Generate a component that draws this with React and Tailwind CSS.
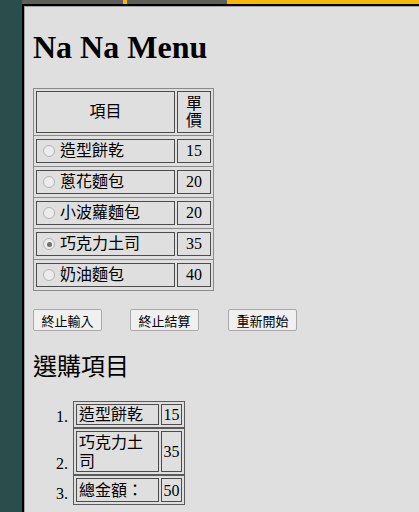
const MENU = [
  { name: "造型餅乾", price: 15 },
  { name: "蔥花麵包", price: 20 },
  { name: "小波蘿麵包", price: 20 },
  { name: "巧克力土司", price: 35, checked: true },
  { name: "奶油麵包", price: 40 },
];

const PICKED = [
  { name: "造型餅乾", price: 15, h: "h-[21px]" },
  { name: "巧克力土司", price: 35, h: "h-[41px]" },
  { name: "總金額：", price: 50, h: "h-[24px]" },
];

function Radio({ checked }) {
  return (
    <span className="ml-[6px] mr-[5px] flex h-[12px] w-[12px] shrink-0 items-center justify-center rounded-full border border-[#b4b4b4] bg-[#ececec]">
      {checked && <span className="h-[5px] w-[5px] rounded-full bg-[#707070]" />}
    </span>
  );
}

export default function App() {
  return (
    <div className="flex h-[512px] w-[419px] overflow-hidden bg-[#2a4e4c] font-['Liberation_Serif','Noto_Sans_CJK_TC',serif] text-black">
      <div className="w-[22px] shrink-0" />
      <div className="flex flex-1 flex-col">
        {/* top progress stripe */}
        <div className="flex h-[4px] shrink-0">
          <div className="w-[101px] bg-[#5e5f5a]" />
          <div className="w-[4px] bg-[#f8b800]" />
          <div className="w-[100px] bg-[#5e5f5a]" />
          <div className="flex-1 bg-[#f8b800]" />
        </div>
        <div className="flex-1 border-l-2 border-t-2 border-black">
          <div className="h-full border-l border-t border-[#a4a4a4] bg-[#dfdfdf] pl-[8px]">
            <h1 className="mt-[22px] text-[32px] font-bold leading-[37px]">Na Na Menu</h1>

            {/* menu table */}
            <div className="mt-[22px] w-[181px] border border-[#8a8a8a] text-[16px]">
              <div className="flex gap-[2px] px-[2px] py-[2px]">
                <div className="flex h-[42px] w-[139px] items-center justify-center border border-[#4c4c4c]">
                  項目
                </div>
                <div className="flex h-[42px] w-[34px] items-center justify-center border border-[#4c4c4c] text-center leading-[17px]">
                  單<br />價
                </div>
              </div>
              {MENU.map((m) => (
                <div key={m.name} className="flex gap-[2px] border-t border-[#8a8a8a] px-[2px] py-[3px]">
                  <div className="flex h-[24px] w-[139px] items-center border border-[#4c4c4c] leading-[20px]">
                    <Radio checked={m.checked} />
                    <span>{m.name}</span>
                  </div>
                  <div className="flex h-[24px] w-[34px] items-center justify-center border border-[#4c4c4c] leading-[20px]">
                    {m.price}
                  </div>
                </div>
              ))}
            </div>

            {/* buttons */}
            <div className="mt-[18px] flex font-['Noto_Sans_CJK_TC',sans-serif] text-[13px]">
              <button className="flex h-[22px] w-[69px] items-center justify-center rounded-[2px] border border-[#a9a9a9] bg-[#f0f0f0] leading-none">
                終止輸入
              </button>
              <button className="ml-[28px] flex h-[22px] w-[69px] items-center justify-center rounded-[2px] border border-[#a9a9a9] bg-[#f0f0f0] leading-none">
                終止結算
              </button>
              <button className="ml-[29px] flex h-[22px] w-[69px] items-center justify-center rounded-[2px] border border-[#a9a9a9] bg-[#f0f0f0] leading-none">
                重新開始
              </button>
            </div>

            <h2 className="mt-[21px] text-[24px] font-normal leading-[30px]">選購項目</h2>

            {/* picked list */}
            <ol className="mt-[19px] flex flex-col text-[16px]">
              {PICKED.map((p, i) => (
                <li key={p.name} className="flex items-end">
                  <span className="w-[40px] pb-[1px] pr-[5px] text-right leading-[20px]">{i + 1}.</span>
                  <div className="flex w-[112px] gap-[2px] border border-[#5a5a5a] px-[2px] py-[2px]">
                    <div className={`flex w-[83px] items-center border border-[#4c4c4c] pl-[2px] leading-[19px] ${p.h}`}>
                      {p.name}
                    </div>
                    <div className={`flex w-[21px] items-center justify-center border border-[#4c4c4c] leading-[19px] ${p.h}`}>
                      {p.price}
                    </div>
                  </div>
                </li>
              ))}
            </ol>
          </div>
        </div>
      </div>
    </div>
  );
}
